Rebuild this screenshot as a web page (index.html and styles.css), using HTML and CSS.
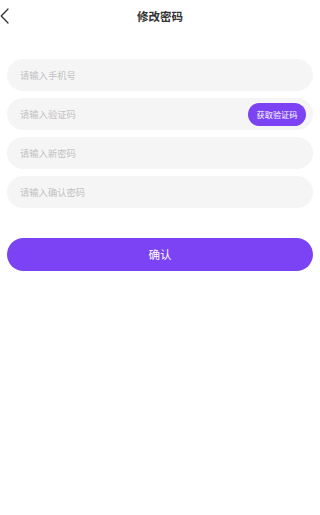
FILE: index.html
```html
<!DOCTYPE html>
<html lang="zh-CN">
<head>
<meta charset="utf-8">
<meta name="viewport" content="width=device-width, initial-scale=1">
<title>修改密码</title>
<link rel="stylesheet" href="styles.css">
</head>
<body>
<div class="page">
  <header class="nav">
    <span class="back" aria-label="返回">
      <svg width="10" height="16" viewBox="0 0 10 16"><polyline points="8,1 1.2,8 8,15" fill="none" stroke="#333" stroke-width="1.3" stroke-linecap="round" stroke-linejoin="round"/></svg>
    </span>
    <h1 class="title">修改密码</h1>
  </header>
  <form class="form">
    <div class="field"><input class="input" type="tel" placeholder="请输入手机号"></div>
    <div class="field"><input class="input" type="text" placeholder="请输入验证码"><button type="button" class="code-btn">获取验证码</button></div>
    <div class="field"><input class="input" type="password" placeholder="请输入新密码"></div>
    <div class="field"><input class="input" type="password" placeholder="请输入确认密码"></div>
    <button type="button" class="submit">确认</button>
  </form>
</div>
</body>
</html>
```
FILE: styles.css
```css
* { box-sizing: border-box; }
html, body { margin: 0; padding: 0; background: #fff; }
body {
  font-family: "Noto Sans CJK SC", "Noto Sans", sans-serif;
  color: #333;
}
.page { width: 320px; }
.nav {
  position: relative;
  height: 34px;
  display: flex;
  align-items: center;
  justify-content: center;
}
.back {
  position: absolute;
  left: 0;
  top: 8px;
  width: 10px;
  height: 16px;
  display: block;
}
.back svg { display: block; }
.title {
  margin: 0;
  font-size: 11.5px;
  font-weight: 700;
  color: #333;
  line-height: 1;
}
.form {
  display: flex;
  flex-direction: column;
  gap: 7px;
  padding: 25px 7px 0;
}
.field {
  height: 32px;
  border-radius: 16px;
  background: #f5f5f5;
  display: flex;
  align-items: center;
  padding: 0 7px 0 13px;
}
.input {
  flex: 1;
  min-width: 0;
  border: 0;
  outline: 0;
  background: transparent;
  font-family: inherit;
  font-size: 9.3px;
  color: #333;
  padding: 0;
  height: 20px;
}
.input::placeholder { color: #c2c2c2; }
.code-btn {
  flex: none;
  width: 58px;
  height: 23px;
  border: 0;
  border-radius: 12px;
  background: #7b43f4;
  color: #fff;
  font-family: inherit;
  font-size: 8.2px;
  padding: 0;
}
.submit {
  margin-top: 22.5px;
  height: 33px;
  border: 0;
  border-radius: 17px;
  background: #7b43f4;
  color: #fff;
  font-family: inherit;
  font-size: 11.5px;
  padding: 0;
}
```
